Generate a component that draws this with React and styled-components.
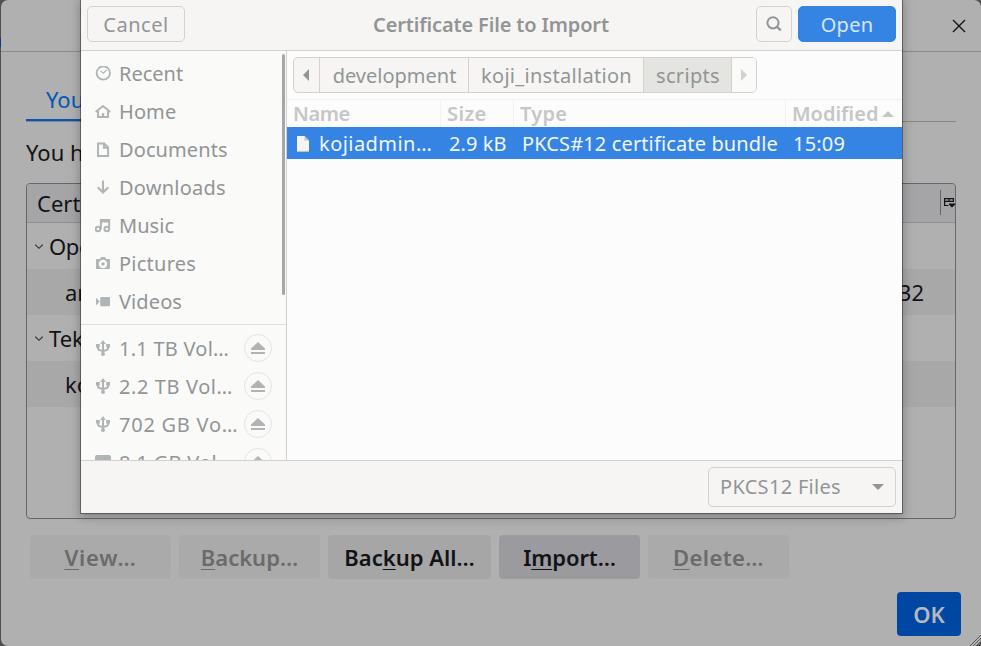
import React from 'react';
import styled, { createGlobalStyle } from 'styled-components';

const GlobalStyle = createGlobalStyle`
  * { box-sizing: border-box; }
  body {
    margin: 0;
    overflow: hidden;
    background: #505050;
    font-family: "Noto Sans", sans-serif;
  }
  button { font-family: inherit; margin: 0; padding: 0; }
  svg { display: block; flex: none; }
`;

const Screen = styled.div`
  position: relative;
  width: 981px;
  height: 646px;
  overflow: hidden;
  padding-left: 1px;
  background: linear-gradient(to bottom, #505050 0 38px, #0a3c82 38px 47px, #505050 47px);
`;

const Text = styled.span`
  letter-spacing: ${(p) => p.$ls || 0}px;
  white-space: pre;
`;

/* ---------- Certificate manager ---------- */

const Manager = styled.main`
  height: 646px;
  border-radius: 7px;
  background: #b0b0b0;
  color: #131316;
  font-size: 22px;
`;

const ManagerHeader = styled.header`
  height: 52px;
  display: flex;
  align-items: center;
  justify-content: flex-end;
  padding-right: 15px;
  border-bottom: 1px solid #8b8b8c;
`;

const TabBar = styled.nav`
  margin: 0 25px;
  height: 70px;
  display: flex;
  align-items: flex-end;
  border-bottom: 1px solid #88888a;
`;

const Tab = styled.div`
  width: 160px;
  height: 44px;
  padding: 7px 0 0 20px;
  line-height: 30px;
  color: #0358b3;
  border-bottom: 2px solid #0358b3;
`;

const Intro = styled.p`
  margin: 0;
  padding: 15px 25px 0;
  height: 61px;
  line-height: 30px;
`;

const CertTable = styled.section`
  margin: 0 25px;
  height: 336px;
  border: 1px solid #666668;
  border-radius: 4px;
  overflow: hidden;
`;

const CertHead = styled.div`
  height: 39px;
  display: flex;
  align-items: center;
  justify-content: space-between;
  padding: 0 0 1px 10px;
  background: #a5a5a8;
  border-bottom: 1px solid #8f8f94;
`;

const ColumnPicker = styled.div`
  height: 25px;
  display: flex;
  align-items: center;
  padding-left: 3px;
  border-left: 1px solid #666668;
`;

const CertRow = styled.div`
  height: 46px;
  display: flex;
  align-items: center;
  gap: 5px;
  padding: 0 31px 1px ${(p) => (p.$child ? 38 : 7)}px;
  background: ${(p) => (p.$child ? '#a8a8a8' : 'transparent')};
`;

const Serial = styled.span`
  margin-left: auto;
`;

const ActionRow = styled.div`
  display: flex;
  gap: 8px;
  padding: 16px 29px 0;
`;

const ActionButton = styled.button`
  width: ${(p) => p.$w || 141}px;
  height: 44px;
  border: 0;
  border-radius: 4px;
  background: ${(p) => p.$bg || '#a6a6a7'};
  color: #131316;
  font-size: 22px;
  font-weight: 600;
  line-height: 30px;
  ${(p) => p.disabled && 'background: #aaaaaa; color: #6b6b6c;'}
`;

const AccessKey = styled.span`
  text-decoration: underline;
  text-decoration-thickness: 1px;
  text-underline-offset: 3px;
  text-decoration-skip-ink: none;
`;

const ConfirmRow = styled.div`
  display: flex;
  justify-content: flex-end;
  padding: 13px 20px 0;
`;

const OkButton = styled(ActionButton)`
  width: 64px;
  background: #0046a3;
  color: #b4b8bf;
`;

const Grip = styled.svg`
  position: absolute;
  right: 0;
  bottom: 0;
`;

/* ---------- File chooser ---------- */

const Chooser = styled.section`
  position: absolute;
  left: 81px;
  top: -6px;
  width: 821px;
  height: 519px;
  padding-top: 6px;
  overflow: hidden;
  display: flex;
  flex-direction: column;
  border-radius: 8px 8px 0 0;
  background: #f6f5f4;
  color: #929595;
  font-size: 20px;
  line-height: 28px;
`;

const ChooserShadow = styled.div`
  position: absolute;
  left: 81px;
  top: -6px;
  width: 821px;
  height: 519px;
  border-radius: 8px 8px 0 0;
  box-shadow: 0 0 0 1px rgba(0, 0, 0, 0.36), 0 3px 9px 1px rgba(0, 0, 0, 0.22), 0 2px 16px 3px rgba(0, 0, 0, 0.06);
`;

const TitleBar = styled.header`
  flex: none;
  height: 51px;
  display: grid;
  grid-template-columns: 140px 1fr 140px;
  align-items: center;
  padding: 0 6px 3px;
  border-bottom: 1px solid #d5d0cc;
`;

const Title = styled.h1`
  margin: 0;
  text-align: center;
  font-size: 20px;
  font-weight: 600;
  padding: 2px 1px 0 0;
`;

const BarButton = styled.button`
  width: ${(p) => p.$w}px;
  height: 36px;
  display: flex;
  align-items: center;
  justify-content: center;
  border: 1px solid ${(p) => (p.$primary ? '#3584e4' : '#d5d0cc')};
  border-radius: 5px;
  background: ${(p) => (p.$primary ? '#3584e4' : '#f6f5f4')};
  color: ${(p) => (p.$primary ? '#d7e6fa' : '#929595')};
  font-size: 20px;
  line-height: 28px;
  padding-top: ${(p) => (p.$icon ? 0 : 2)}px;
`;

const BarActions = styled.div`
  display: flex;
  gap: 6px;
`;

const Body = styled.div`
  flex: none;
  height: 410px;
  display: flex;
  border-bottom: 1px solid #d5d0cc;
`;

const Sidebar = styled.aside`
  position: relative;
  width: 206px;
  overflow: hidden;
  padding-top: 4px;
  background: #fafaf9;
  border-right: 1px solid #d5d0cc;
`;

const Scrollbar = styled.div`
  position: absolute;
  right: 1px;
  top: 3px;
  width: 3px;
  height: 241px;
  border-radius: 2px;
  background: #a4a7a7;
`;

const Place = styled.div`
  height: 38px;
  display: flex;
  align-items: center;
  gap: 8px;
  padding: 0 14px;
  color: #929595;
`;

const PlaceIcon = styled.svg`
  color: #b0b4b4;
`;

const Places = styled.div`
  height: 270px;
  border-bottom: 1px solid #dededb;
  margin-bottom: 4px;
`;

const VolumeName = styled(Text)`
  width: 117px;
  padding-top: 1px;
`;

const Eject = styled.span`
  flex: none;
  width: 28px;
  height: 28px;
  display: flex;
  align-items: center;
  justify-content: center;
  border: 1px solid #e3e3e1;
  border-radius: 50%;
  color: #b0b4b4;
`;

const Files = styled.div`
  flex: 1;
  min-width: 0;
  background: #fcfcfc;
`;

const PathArea = styled.div`
  height: 48px;
  padding: 6px 6px 0;
`;

const PathBar = styled.div`
  width: 464px;
  height: 36px;
  display: flex;
  border: 1px solid #d5d0cc;
  border-radius: 5px;
  overflow: hidden;
  background: #f6f5f4;
`;

const Crumb = styled.div`
  flex: none;
  width: ${(p) => p.$w}px;
  display: flex;
  align-items: center;
  justify-content: center;
  padding: ${(p) => (p.$icon ? '0 1px 0 0' : '1px 0 0 1px')};
  border-left: ${(p) => (p.$first ? 0 : 1)}px solid #d5d0cc;
  background: ${(p) => p.$bg || 'transparent'};
`;

const Columns = styled.div`
  display: grid;
  grid-template-columns: 154px 73px 272px 1fr;
`;

const ListHead = styled(Columns)`
  height: 28px;
  grid-template-rows: 27px;
  border-top: 1px solid #f1f1f1;
  color: #c5c7c7;
  font-weight: 600;
  line-height: 26px;
`;

const HeadCell = styled.div`
  display: flex;
  align-items: center;
  gap: 4px;
  padding: 0 0 0 6px;
  border-right: ${(p) => (p.$last ? 0 : 1)}px solid #f1f1f1;
`;

const FileRow = styled(Columns)`
  height: 32px;
  background: #3584e4;
  color: #f2f7fd;
`;

const FileCell = styled.div`
  display: flex;
  align-items: center;
  gap: 8px;
  padding: 1px 0 0 ${(p) => p.$pad}px;
`;

const Footer = styled.footer`
  flex: 1;
  display: flex;
  justify-content: flex-end;
  padding: 6px;
`;

const Filter = styled.div`
  width: 188px;
  height: 40px;
  display: flex;
  align-items: center;
  justify-content: space-between;
  padding: 0 11px 0 11px;
  border: 1px solid #d5d0cc;
  border-radius: 5px;
`;

/* ---------- Icons ---------- */

const glyphs = {
  recent: (
    <g fill="none" stroke="currentColor">
      <circle cx="8.3" cy="7" r="6.7" strokeWidth="1.8" />
      <path d="M5.3 4.6 8.3 7.2 11.8 3.8" strokeWidth="1.1" />
    </g>
  ),
  home: (
    <g fill="none" stroke="currentColor" strokeWidth="2">
      <path d="M.7 8 8 2l7.3 6" />
      <path d="M3 7v6h10V7" />
      <path d="M8 13V9.3" strokeWidth="2.4" />
    </g>
  ),
  documents: <path d="M3 1.4h6.2l3.9 4v8.5H3zM9 1.8v4h4" fill="none" stroke="currentColor" strokeWidth="2" />,
  downloads: <path d="M8 .5v12M2.7 7.3 8 12.5l5.3-5.2" fill="none" stroke="currentColor" strokeWidth="2.1" />,
  music: (
    <g fill="none" stroke="currentColor" strokeWidth="2">
      <circle cx="3" cy="11" r="2.3" />
      <circle cx="11.8" cy="11" r="2.3" />
      <path d="M5.9 11V2h8.3v9M5.9 3.6h8" />
    </g>
  ),
  pictures: (
    <path
      fill="currentColor"
      fillRule="evenodd"
      d="M1.5 3H5l1-2h4l1 2h3.5l.5.5v9l-.5.5h-13l-.5-.5v-9zM8 3.8a4.2 4.2 0 1 0 0 8.4 4.2 4.2 0 0 0 0-8.4zm0 2.4a1.8 1.8 0 1 1 0 3.6 1.8 1.8 0 0 1 0-3.6z"
    />
  ),
  videos: <path fill="currentColor" d="M1 3.7 4.8 7.6 1 11.5zM6 3h8.3l.7.7v7.8l-.7.7H6l-.8-.7V3.7z" />,
  usb: (
    <g fill="none" stroke="currentColor" strokeWidth="2">
      <path d="M8 2v12M2.9 5v3c0 1.8 1.2 2.6 5.1 2.8M13.1 5v3c0 1.8-1.2 2.6-5.1 2.8" />
      <path d="m8 0 2.8 4H5.2zM1 4h3.8v3.4H1zM11.2 4H15v3.4h-3.8z" fill="currentColor" stroke="none" />
      <circle cx="8" cy="14" r="2" fill="currentColor" stroke="none" />
    </g>
  ),
  disk: <rect x="0" y="1" width="16" height="13" rx="2" fill="currentColor" />,
};

const Icon = ({ name }) => (
  <PlaceIcon width="16" height="16" viewBox="0 0 16 16">
    {glyphs[name]}
  </PlaceIcon>
);

const Triangle = ({ w, h, d, color }) => (
  <svg width={w} height={h} viewBox={`0 0 ${w} ${h}`}>
    <path d={d} fill={color} />
  </svg>
);

const Twisty = () => (
  <svg width="10" height="10" viewBox="0 0 10 10">
    <path d="M1.2 3.6 5 7.3 8.8 3.6" fill="none" stroke="#2b2b2e" strokeWidth="1.1" />
  </svg>
);

const places = [
  ['recent', 'Recent', 0],
  ['home', 'Home', 0.1],
  ['documents', 'Documents', 0.1],
  ['downloads', 'Downloads', 0.22],
  ['music', 'Music', 0.05],
  ['pictures', 'Pictures', 0.25],
  ['videos', 'Videos', 0.1],
];

const volumes = [
  ['usb', '1.1 TB Vol…', 0.25],
  ['usb', '2.2 TB Vol…', 0.6],
  ['usb', '702 GB Vo…', 0.75],
  ['disk', '8.1 GB Vol…', 0.3],
];

export default function App() {
  return (
    <Screen>
      <GlobalStyle />
      <Manager>
        <ManagerHeader>
          <svg width="14" height="14" viewBox="0 0 14 14">
            <path d="m1 1 12 12M13 1 1 13" stroke="#131316" strokeWidth="1.4" fill="none" />
          </svg>
        </ManagerHeader>
        <TabBar>
          <Tab>You</Tab>
        </TabBar>
        <Intro>You h</Intro>
        <CertTable>
          <CertHead>
            <Text>Certi</Text>
            <ColumnPicker>
              <svg width="11" height="11" viewBox="0 0 11 11">
                <path d="M4.5 8.5H.6V1.6h8.8V5M.6 4.4h8.8M5 1.6v2.8" fill="none" stroke="#131316" strokeWidth="1.2" />
                <path d="M5 6.5h6v1.2L8 10.4 5 7.7z" fill="#131316" />
              </svg>
            </ColumnPicker>
          </CertHead>
          <CertRow><Twisty /><Text $ls={-0.4}>Open</Text></CertRow>
          <CertRow $child><Text>an</Text><Serial>32</Serial></CertRow>
          <CertRow><Twisty /><Text>Tek</Text></CertRow>
          <CertRow $child><Text>ko</Text></CertRow>
        </CertTable>
        <ActionRow>
          <ActionButton disabled><Text $ls={0.8}><AccessKey>V</AccessKey>iew…</Text></ActionButton>
          <ActionButton disabled><Text $ls={0}><AccessKey>B</AccessKey>ackup…</Text></ActionButton>
          <ActionButton $w={163}><Text $ls={0}>Bac<AccessKey>k</AccessKey>up All…</Text></ActionButton>
          <ActionButton $bg="#9b9a9f"><Text $ls={-0.1}>I<AccessKey>m</AccessKey>port…</Text></ActionButton>
          <ActionButton disabled><Text $ls={0.4}><AccessKey>D</AccessKey>elete…</Text></ActionButton>
        </ActionRow>
        <ConfirmRow>
          <OkButton><Text>OK</Text></OkButton>
        </ConfirmRow>
      </Manager>
      <Grip width="12" height="12" viewBox="0 0 12 12">
        <path d="M12 6.5 A 5.5 5.5 0 0 1 6.5 12 H12z" fill="#505050" />
        <path d="M1 12 12 1M4 12l8-8M7 12l5-5" stroke="#5a5a5a" strokeWidth="1" />
        <path d="M2.5 12 12 2.5M5.5 12 12 5.5" stroke="#c4c4c4" strokeWidth="0.7" />
      </Grip>

      <ChooserShadow />
      <Chooser>
        <TitleBar>
          <BarButton $w={98}><Text $ls={0.55}>Cancel</Text></BarButton>
          <Title><Text $ls={-0.15}>Certificate File to Import</Text></Title>
          <BarActions>
            <BarButton $w={36} $icon>
              <svg width="18" height="18" viewBox="0 0 18 18">
                <circle cx="8" cy="7.8" r="5.6" fill="none" stroke="#929595" strokeWidth="2" />
                <path d="m12 11.8 3.8 3.6" stroke="#929595" strokeWidth="2.2" />
              </svg>
            </BarButton>
            <BarButton $w={98} $primary><Text $ls={0.25}>Open</Text></BarButton>
          </BarActions>
        </TitleBar>
        <Body>
          <Sidebar>
            <Places>
              {places.map(([icon, label, ls]) => (
                <Place key={label}><Icon name={icon} /><Text $ls={ls}>{label}</Text></Place>
              ))}
            </Places>
            {volumes.map(([icon, label, ls]) => (
              <Place key={label}>
                <Icon name={icon} />
                <VolumeName $ls={ls}>{label}</VolumeName>
                <Eject>
                  <svg width="14" height="12" viewBox="0 0 14 12">
                    <path d="M7 0 14 6.6V8H0V6.6zM0 10h14v2H0z" fill="currentColor" />
                  </svg>
                </Eject>
              </Place>
            ))}
            <Scrollbar />
          </Sidebar>
          <Files>
            <PathArea>
              <PathBar>
                <Crumb $w={25} $first $icon><Triangle w={6} h={12} d="M6 0v12L0 6z" color="#929595" /></Crumb>
                <Crumb $w={149}><Text>development</Text></Crumb>
                <Crumb $w={175}><Text $ls={0.3}>koji_installation</Text></Crumb>
                <Crumb $w={88} $bg="#e4e4e0"><Text $ls={0.3}>scripts</Text></Crumb>
                <Crumb $w={25} $icon $bg="#fafaf9"><Triangle w={6} h={12} d="M0 0v12l6-6z" color="#d5d0cc" /></Crumb>
              </PathBar>
            </PathArea>
            <ListHead>
              <HeadCell><Text $ls={-0.4}>Name</Text></HeadCell>
              <HeadCell><Text $ls={0.4}>Size</Text></HeadCell>
              <HeadCell><Text $ls={0.3}>Type</Text></HeadCell>
              <HeadCell $last>
                <Text>Modified</Text>
                <Triangle w={12} h={6} d="M0 6h12L6 0z" color="#c5c7c7" />
              </HeadCell>
            </ListHead>
            <FileRow>
              <FileCell $pad={8}>
                <svg width="16" height="18" viewBox="0 0 16 18">
                  <path d="M2 1h7.5L14 5.5V16.5H2z" fill="#f6f5f4" />
                  <path d="M9.5 1v4.5H14z" fill="#c8c3bd" />
                  <path d="M2 16.3h12" stroke="#c8c3bd" />
                </svg>
                <Text $ls={0.45}>kojiadmin…</Text>
              </FileCell>
              <FileCell $pad={8}><Text $ls={0.1}>2.9 kB</Text></FileCell>
              <FileCell $pad={8}><Text $ls={0.13}>PKCS#12 certificate bundle</Text></FileCell>
              <FileCell $pad={7}><Text $ls={0.2}>15:09</Text></FileCell>
            </FileRow>
          </Files>
        </Body>
        <Footer>
          <Filter>
            <Text $ls={0.3}>PKCS12 Files</Text>
            <Triangle w={12} h={6} d="M0 0h12L6 6z" color="#929595" />
          </Filter>
        </Footer>
      </Chooser>
    </Screen>
  );
}
